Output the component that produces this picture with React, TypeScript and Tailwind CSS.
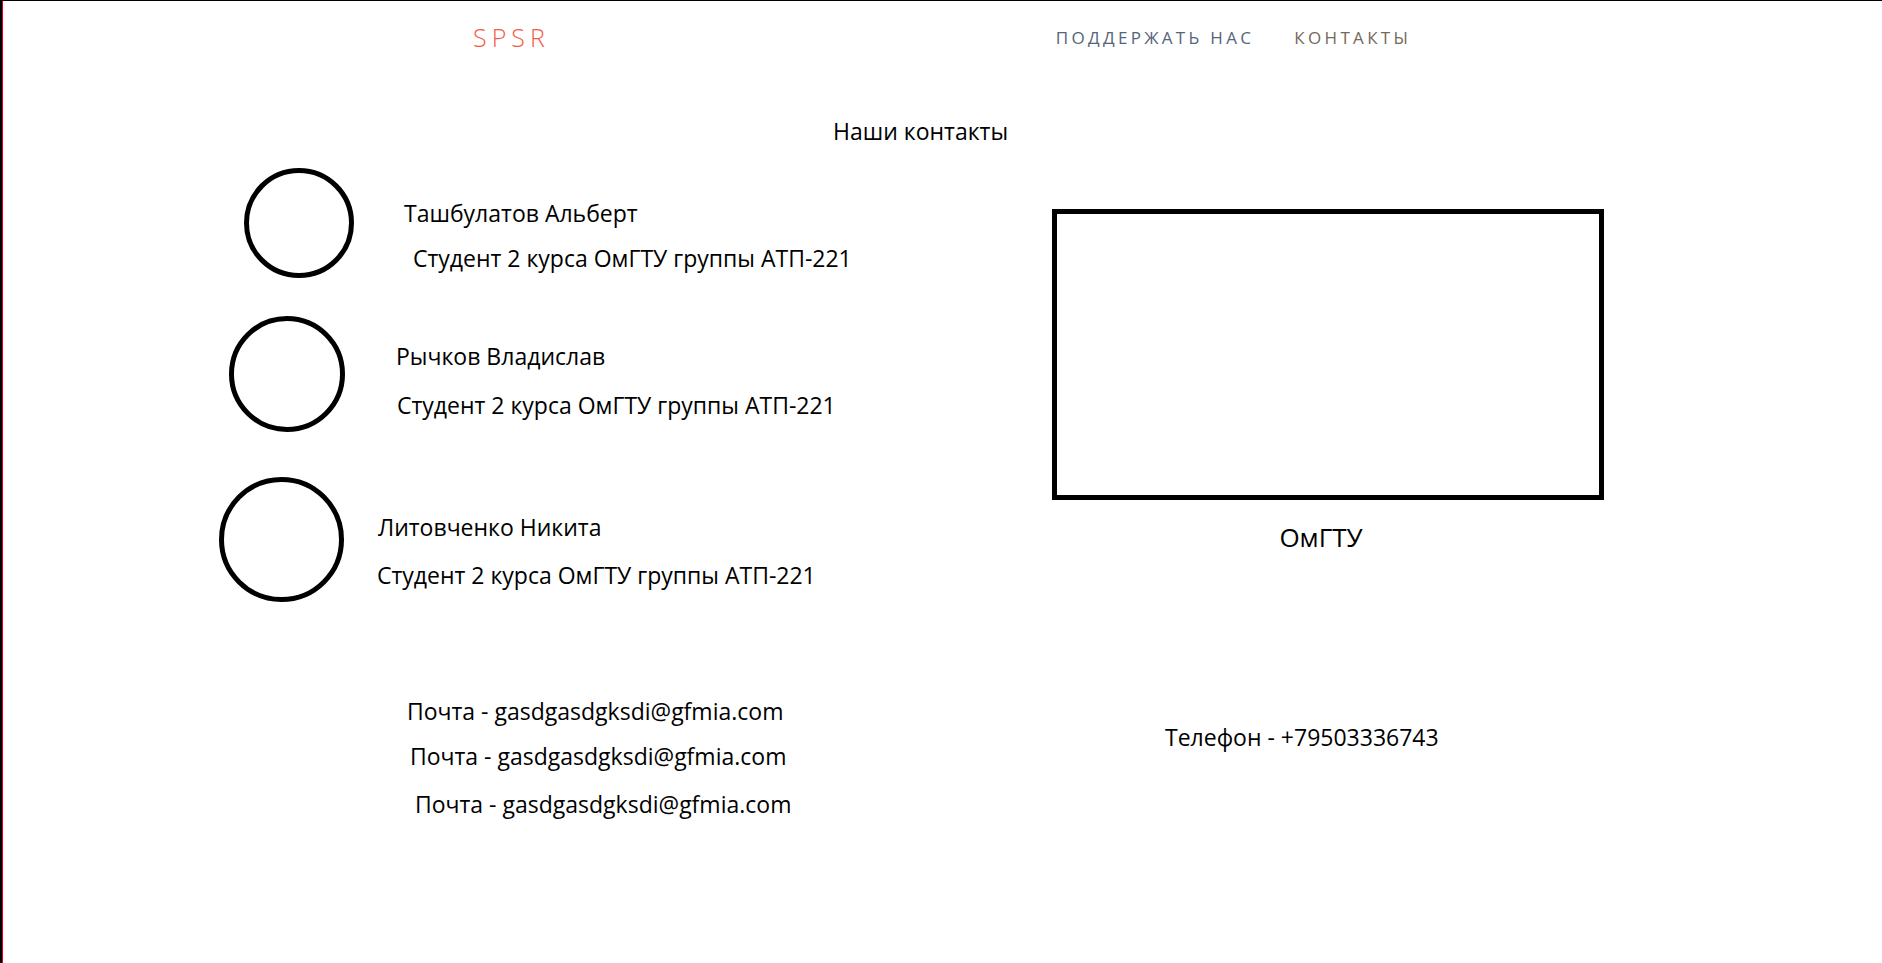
const people = [
  {
    name: "Ташбулатов Альберт",
    circle: "ml-[241px] w-[110px] h-[110px]",
    text: "ml-[50px] pt-[30px]",
    role: "mt-[15px] ml-[9px]",
  },
  {
    name: "Рычков Владислав",
    circle: "ml-[226px] w-[116px] h-[116px]",
    text: "ml-[51px] pt-[25px]",
    role: "mt-[19px] ml-[1px]",
  },
  {
    name: "Литовченко Никита",
    circle: "ml-[216px] w-[125px] h-[125px]",
    text: "ml-[34px] pt-[35px]",
    role: "mt-[18px] -ml-[1px]",
  },
];

const rowGaps = ["mt-[22px]", "mt-[38px]", "mt-[45px]"];

const emails = [
  "mt-[94px] ml-[404px]",
  "mt-[15px] ml-[407px]",
  "mt-[18px] ml-[412px]",
];

export default function App() {
  return (
    <div
      className="min-h-screen w-full bg-white border-t border-l-2 border-black text-black"
      style={{ fontFamily: '"Open Sans", "Noto Sans", sans-serif' }}
    >
      <div className="min-h-[962px] border-l border-red-600">
        {/* шапка */}
        <header className="flex items-center h-[74px]">
          <span className="ml-[470px] text-[25px] font-light tracking-[0.2em] text-[#f25a43]">
            SPSR
          </span>
          <nav className="flex ml-[506px] gap-[40px] text-[17px] tracking-[0.195em]">
            <a className="text-[#55657a]">ПОДДЕРЖАТЬ НАС</a>
            <a className="text-[#76685a]">КОНТАКТЫ</a>
          </nav>
        </header>

        <h1 className="mt-[41px] ml-[830px] text-[23px] leading-[30px]">
          Наши контакты
        </h1>

        <main className="flex items-start text-[23px] leading-[30px]">
          <div className="w-[1049px] shrink-0">
            {people.map((p, i) => (
              <div key={p.name} className={`flex items-start ${rowGaps[i]}`}>
                <div
                  className={`shrink-0 rounded-full border-[5px] border-black ${p.circle}`}
                />
                <div className={p.text}>
                  <div>{p.name}</div>
                  <div className={p.role}>Студент 2 курса ОмГТУ группы АТП-221</div>
                </div>
              </div>
            ))}

            {emails.map((cls, i) => (
              <div key={i} className={cls}>
                Почта - gasdgasdgksdi@gfmia.com
              </div>
            ))}
          </div>

          <div className="mt-[63px]">
            <div className="w-[552px] h-[291px] border-[5px] border-black" />
            <div className="mt-[22px] w-[552px] pr-[14px] text-center text-[26px]">
              ОмГТУ
            </div>
            <div className="mt-[170px] ml-[113px]">
              Телефон - +79503336743
            </div>
          </div>
        </main>
      </div>
    </div>
  );
}
